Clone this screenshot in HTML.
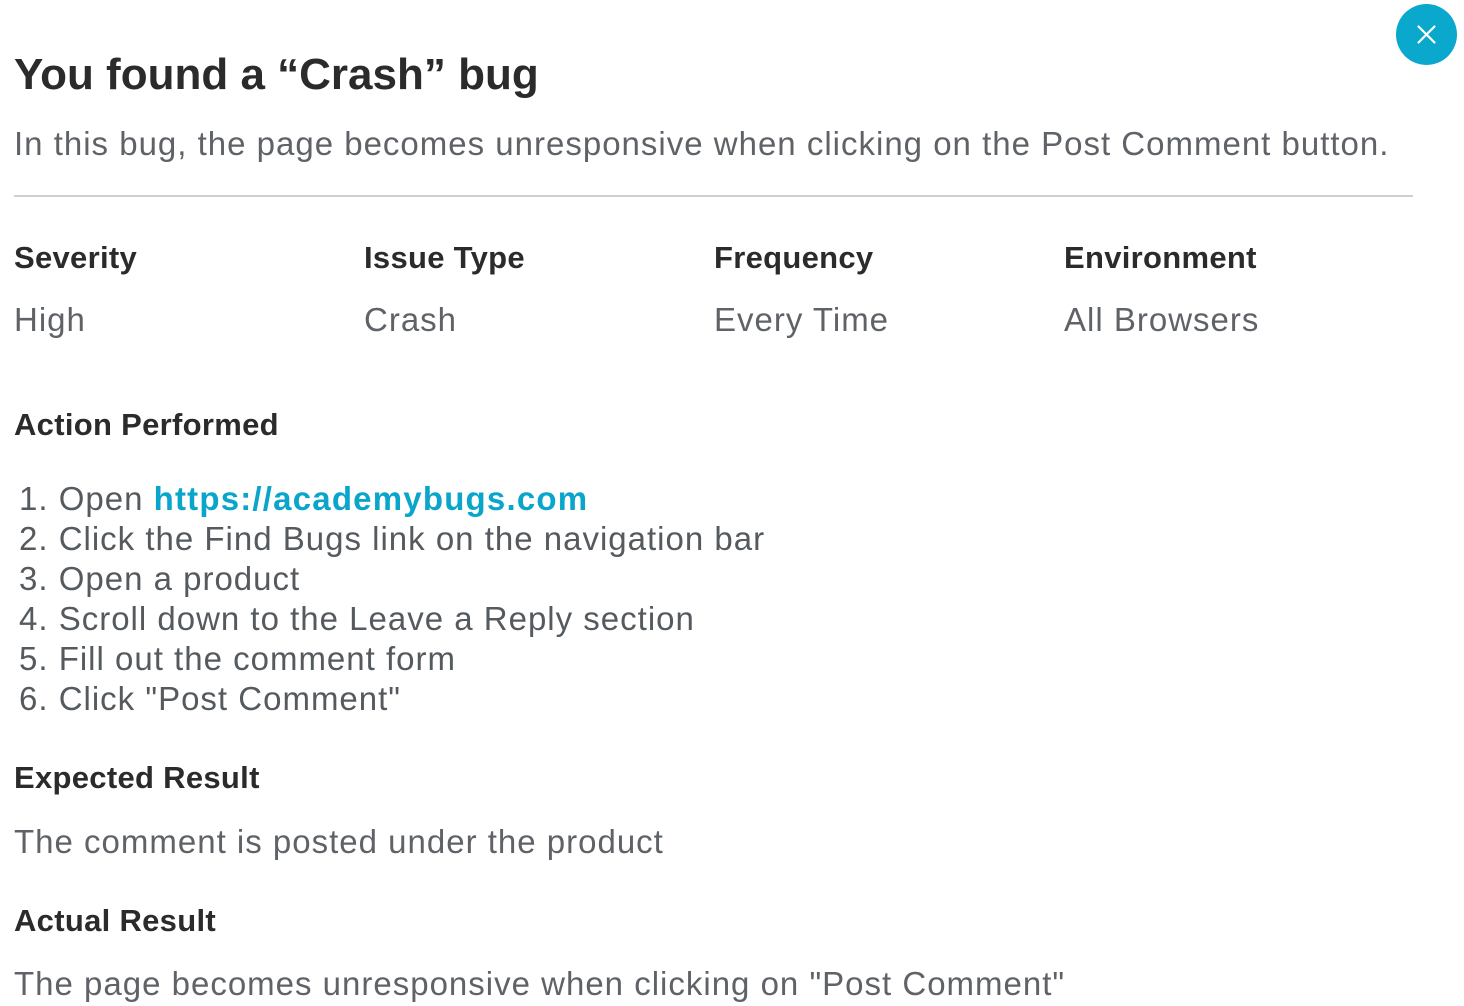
<!DOCTYPE html>
<html><head><meta charset="utf-8"><style>
body{margin:0;width:1464px;height:1006px;background:#fff;position:relative;overflow:hidden;font-family:"Liberation Sans",Arial,sans-serif;}
.a{position:absolute;line-height:1;white-space:nowrap;}
.h{font-weight:bold;color:#2b2b2b;font-size:31px;letter-spacing:0.3px;}
.v{color:#5f6368;font-size:33px;letter-spacing:1px;}
.l{color:#555a5f;font-size:33px;letter-spacing:1px;}
a{color:#0aa5cb;font-weight:bold;text-decoration:none;letter-spacing:1.2px;}
</style></head><body>
<div class="a" style="left:14px;top:53px;font-size:44px;font-weight:bold;color:#2b2b2b">You found a “Crash” bug</div>
<div class="a v" style="left:14px;top:127px">In this bug, the page becomes unresponsive when clicking on the Post Comment button.</div>
<div style="position:absolute;left:14px;top:195px;width:1399px;height:2px;background:#cfcfcf"></div>
<div class="a h" style="left:14px;top:242px">Severity</div>
<div class="a h" style="left:364px;top:242px">Issue Type</div>
<div class="a h" style="left:714px;top:242px">Frequency</div>
<div class="a h" style="left:1064px;top:242px">Environment</div>
<div class="a v" style="left:14px;top:303px">High</div>
<div class="a v" style="left:364px;top:303px">Crash</div>
<div class="a v" style="left:714px;top:303px">Every Time</div>
<div class="a v" style="left:1064px;top:303px">All Browsers</div>
<div class="a h" style="left:14px;top:409px">Action Performed</div>
<div class="a l" style="left:19px;top:482px">1. Open <a>https://academybugs.com</a></div>
<div class="a l" style="left:19px;top:522px">2. Click the Find Bugs link on the navigation bar</div>
<div class="a l" style="left:19px;top:562px">3. Open a product</div>
<div class="a l" style="left:19px;top:602px">4. Scroll down to the Leave a Reply section</div>
<div class="a l" style="left:19px;top:642px">5. Fill out the comment form</div>
<div class="a l" style="left:19px;top:682px">6. Click "Post Comment"</div>
<div class="a h" style="left:14px;top:762px">Expected Result</div>
<div class="a v" style="left:14px;top:825px">The comment is posted under the product</div>
<div class="a h" style="left:14px;top:905px">Actual Result</div>
<div class="a v" style="left:14px;top:967px">The page becomes unresponsive when clicking on "Post Comment"</div>
<svg style="position:absolute;left:1396px;top:4px" width="61" height="61" viewBox="0 0 61 61"><circle cx="30.5" cy="30.5" r="30.5" fill="#0aa8cc"/><path d="M22.5 22.5L38.5 38.5M38.5 22.5L22.5 38.5" stroke="#fff" stroke-width="2.2" stroke-linecap="round"/></svg>
</body></html>
